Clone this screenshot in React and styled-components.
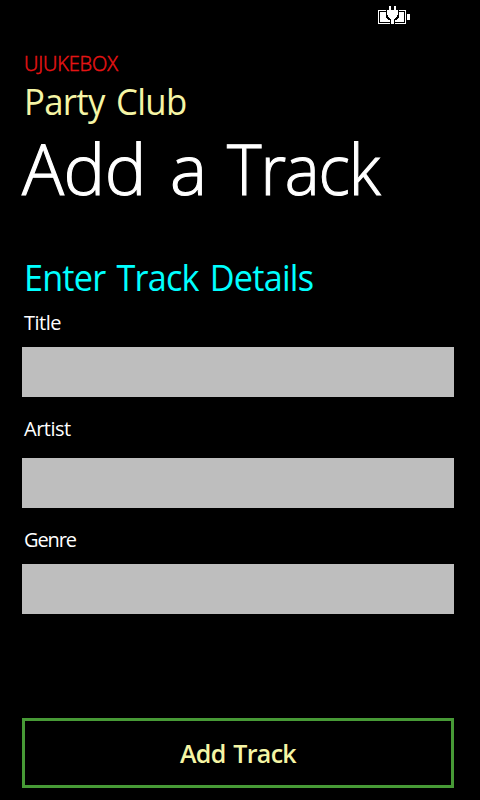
import React from "react";
import styled, { createGlobalStyle } from "styled-components";

const GlobalStyle = createGlobalStyle`
  *, *::before, *::after { box-sizing: border-box; }
  body { margin: 0; background: #000; }
`;

const Phone = styled.main`
  display: flex;
  flex-direction: column;
  width: 480px;
  height: 800px;
  padding: 0 26px 12px 22px;
  overflow: hidden;
  background: #000;
  color: #fff;
  font-family: "Open Sans", "Noto Sans", sans-serif;
  white-space: nowrap;
`;

const StatusBar = styled.div`
  display: flex;
  justify-content: flex-end;
  height: 52px;
  padding: 6px 44px 0 0;
`;

const Brand = styled.div`
  padding-left: 2px;
  color: #e51414;
  font-size: 20px;
  font-weight: 300;
  line-height: 24px;
  letter-spacing: -0.15px;
  -webkit-text-stroke: 0.5px currentColor;
`;

const Venue = styled.div`
  margin-top: 2px;
  padding-left: 2px;
  color: #f5f5a5;
  font-size: 36px;
  line-height: 48px;
  letter-spacing: -0.7px;
  word-spacing: 3px;
  transform: scaleX(0.965);
  transform-origin: 0 50%;
`;

const Title = styled.h1`
  display: flex;
  gap: 24px;
  margin: 0;
  font-size: 70px;
  font-weight: 300;
  line-height: 84px;
  -webkit-text-stroke: 1.1px currentColor;
`;

const Word = styled.span`
  margin-left: ${(p) => p.$shift || 0}px;
  letter-spacing: ${(p) => p.$spacing}px;
  transform: scaleX(${(p) => p.$stretch || 1});
  transform-origin: 0 50%;
`;

const Heading = styled.h2`
  margin: 44px 0 9px;
  padding-left: 2px;
  color: #00ffff;
  font-size: 36px;
  font-weight: 400;
  line-height: 48px;
  letter-spacing: -0.8px;
  word-spacing: 3px;
  transform: scaleX(0.95);
  transform-origin: 0 50%;
`;

const Field = styled.label`
  display: flex;
  flex-direction: column;
  gap: ${(p) => p.$gap}px;
  margin-bottom: 19px;
`;

const Label = styled.span`
  padding-left: 2px;
  font-size: 20px;
  line-height: 24px;
  letter-spacing: ${(p) => p.$spacing}px;
`;

const Input = styled.input`
  width: 100%;
  height: 50px;
  margin-top: -1px;
  margin-bottom: 1px;
  padding: 0 10px;
  border: 0;
  border-radius: 0;
  outline: 0;
  background: #bebebe;
  font: inherit;
`;

const SubmitButton = styled.button`
  height: 70px;
  margin-top: auto;
  padding: 0;
  border: 3px solid #479a36;
  background: #000;
  color: #f5f5a5;
  font: 600 25px/34px "Open Sans", "Noto Sans", sans-serif;
  letter-spacing: -0.7px;
  word-spacing: 2px;
`;

const BatteryIcon = () => (
  <svg width="32" height="19" viewBox="0 0 32 19" fill="#fff" shapeRendering="crispEdges" aria-label="Charging">
    <path d="M0 4h8v1H1v12h11v1H0z" />
    <path d="M21 4h7v14H17v-1h10V5h-6z" />
    <path d="M2 6h6v6h1v1h1v1h2v2H2zM21 6h5v10h-9v-2h2v-1h1v-1h1z" />
    <path d="M11 0h2v4h3V0h2v4h2v5h-1v2h-1v1h-1v1h-1v5h-3v-5h-1v-1h-1v-1h-1V9H9V4h2z" />
    <path d="M29 8h3v6h-3z" />
  </svg>
);

const fields = [
  { label: "Title", gap: 13, spacing: -0.5 },
  { label: "Artist", gap: 18, spacing: -0.5 },
  { label: "Genre", gap: 13, spacing: -1.1 },
];

export default function App() {
  return (
    <Phone>
      <GlobalStyle />
      <StatusBar>
        <BatteryIcon />
      </StatusBar>
      <Brand>UJUKEBOX</Brand>
      <Venue>Party Club</Venue>
      <Title>
        <Word $spacing={-0.5}>Add</Word>
        <Word $spacing={0}>a</Word>
        <Word $spacing={-1.2} $stretch={0.94} $shift={-4}>Track</Word>
      </Title>
      <Heading>Enter Track Details</Heading>
      {fields.map((f) => (
        <Field key={f.label} $gap={f.gap}>
          <Label $spacing={f.spacing}>{f.label}</Label>
          <Input type="text" />
        </Field>
      ))}
      <SubmitButton type="button">Add Track</SubmitButton>
    </Phone>
  );
}
